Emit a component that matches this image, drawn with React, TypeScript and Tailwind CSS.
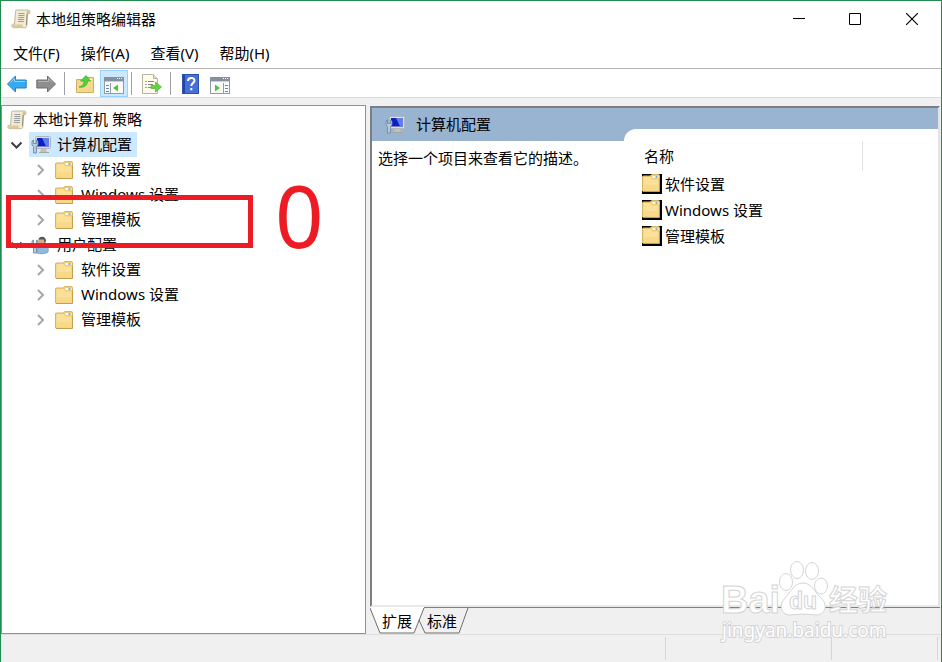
import React from 'react';

const sans = "font-['Noto_Sans','Noto_Sans_CJK_SC',sans-serif]";

function ScrollIcon() {
  return (
    <svg width="20" height="20" viewBox="0 0 20 20">
      <path d="M5.500 1h11.500c1.600 0 2 1 2 2.200S18 5 16.500 5l-.6 11.500c0 1.500-1 2.200-2.400 2.200H3C1.500 18.700.8 17.600.8 16.500c0-1 1-1.500 2.700-1.500L4.500 3.500C4.500 2 4.500 1 5.500 1z" fill="#f1ead4" stroke="#b3a684" strokeWidth="0.800" />
      <path d="M1.500 15.500h9.800c.2 1.500.6 2.700 1.700 3H3c-1.500 0-2-1.500-1.500-3z" fill="#dccb98" />
      <path d="M16.500 1.500c-1 1-.8 2.500-.6 3.500h1.600c1.500-.5 1.500-3-1-3.500z" fill="#d2c08c" />
      <path d="M16 5l-.6 11" stroke="#9c8f6e" />
      <path d="M7.500 4.500h6M7.400 6.500h6M7.200 8.500h6M7 10.500h6M6.900 12.500h6" stroke="#9b9ba0" />
    </svg>
  );
}

function FolderIcon() {
  return (
    <svg width="18" height="18" viewBox="0 0 18 18">
      <path d="M.5 17V3c0-.6.4-1 1-1H8L10 .5h6.500c.6 0 1 .4 1 1V16.500c0 .5-.4 1-1 1z" fill="#f0cd75" stroke="#d9b564" />
      <path d="M1.500 3h7l2 2.500h6v11h-15z" fill="#fbe09a" />
      <path d="M1.500 11h15v5.500h-15z" fill="#f8d987" />
      <path d="M10.500 3h6" stroke="#fffdf2" strokeWidth="2" />
      <path d="M13.500 3h2" stroke="#4b9bd4" strokeWidth="1.500" />
      <path d="M17.500 5v12.500H1" fill="none" stroke="#c69e4b" />
    </svg>
  );
}

function ComputerIcon() {
  return (
    <svg width="20" height="20" viewBox="0 0 20 20">
      <rect x="4.500" y="1.500" width="15" height="12" rx="1" fill="#dcdfe4" stroke="#b2b6bd" />
      <rect x="6" y="3" width="12" height="8.500" fill="#0d1ec4" />
      <path d="M11 3h7v8.500h-3z" fill="#5c80e8" />
      <path d="M10 14h5l1 3H9z" fill="#c4c0b6" />
      <path d="M8 17.500h10" stroke="#a8a49b" />
      <path d="M1 6v4l1.500 1.500V18h3v-6.500L7 10V6L5.500 5v3.500h-3V5z" fill="#b4cbe0" stroke="#6b8298" strokeWidth="0.800" />
    </svg>
  );
}

function UserIcon() {
  return (
    <svg width="20" height="20" viewBox="0 0 20 20">
      <path d="M6 18c-.5-6 1-8 5-8 5 0 7 3 6 7-2 2-8.500 2-11 1z" fill="#8fb9e2" stroke="#7ba3cb" />
      <circle cx="11" cy="6" r="3.800" fill="#d6ab85" />
      <path d="M7.500 4.500C8 .5 15 .5 15 6l-1.500 2.500-.5-4z" fill="#5a544f" />
      <path d="M1 6v4l1.500 1.500V18h3v-6.500L7 10V6L5.500 5v3.500h-3V5z" fill="#b4cbe0" stroke="#6b8298" strokeWidth="0.800" />
    </svg>
  );
}

function ArrowIcon({ forward = false }: { forward?: boolean }) {
  return (
    <svg width="20" height="20" viewBox="0 0 20 20" strokeLinejoin="round">
      {forward ? (
        <>
          <path d="M19.500 10 11.500 2v4H.8v8h10.700v4z" fill="#8e8e8e" stroke="#717171" />
          <path d="M2 7.500h10.500v-3l4 4" fill="none" stroke="#b4b4b4" />
        </>
      ) : (
        <>
          <path d="M.5 10 8.500 2v4h10.700v8H8.500v4z" fill="#35aaf0" stroke="#2583c6" />
          <path d="M18 7.500H7.500v-3l-4 4" fill="none" stroke="#8fd3fa" />
        </>
      )}
    </svg>
  );
}

function FolderUpIcon() {
  return (
    <svg width="20" height="20" viewBox="0 0 20 20">
      <path d="M1.500 18.500V5.500h8l1.500-2h7.500v15z" fill="#f5d88b" stroke="#cfae66" />
      <path d="M13 5.500h4" stroke="#fff" />
      <path d="M4 13c4-1 5-3 5-6H5.500L11 1.500 15.500 7h-3c0 4-3 7-8.500 6z" fill="#57cf3d" stroke="#43ad30" strokeWidth="0.800" />
    </svg>
  );
}

function PanelIcon({ right = false }: { right?: boolean }) {
  return (
    <svg width="20" height="17" viewBox="0 0 20 17">
      <rect x="0.500" y="0.500" width="19" height="16" fill="#fafafa" stroke="#9299a3" />
      <path d="M0 2h20" stroke="#8590a0" strokeWidth="4" />
      <path d="M13 1.500h1M15 1.500h1M17 1.500h1" stroke="#fff" />
      <path d="M1 4.500h18" stroke="#c9ced6" />
      {right ? (
        <>
          <path d="M13.500 6v10" stroke="#9299a3" />
          <path d="M15 8.500h3M15 11.500h3M15 14.500h3" stroke="#4f8bd2" />
          <path d="M5 7.500v7l5-3.500z" fill="#4bc638" />
        </>
      ) : (
        <>
          <path d="M6.500 6v10" stroke="#9299a3" />
          <path d="M2 8.500h3M2 11.500h3M2 14.500h3" stroke="#4f8bd2" />
          <path d="M14 7.500v7L9 11z" fill="#4bc638" />
        </>
      )}
    </svg>
  );
}

function ExportIcon() {
  return (
    <svg width="20" height="20" viewBox="0 0 20 20">
      <path d="M.5.5h11l4 4V19.500H.5z" fill="#fffbea" stroke="#b9b5a0" />
      <path d="M11.500.5v4h4" fill="#e8e0c3" stroke="#b9b5a0" />
      <path d="M3.500 7.500h1M3.500 10.500h1M3.500 13.500h1" stroke="#444" />
      <path d="M6 7.500h6M6 10.500h5M6 13.500h5" stroke="#85858f" />
      <path d="M9 11.500h4.500V8l6 5-6 5v-3.500H9z" fill="#62d43f" stroke="#58bd3c" strokeWidth="0.800" />
    </svg>
  );
}

function HelpIcon() {
  return (
    <svg width="17" height="20" viewBox="0 0 17 20">
      <rect x="0.500" y="0.500" width="16" height="19" fill="#4470d8" stroke="#2c50ab" />
      <path d="M2 1v18" stroke="#2646a0" strokeWidth="2" />
      <path d="M6 7c0-4 6.500-4 6.500-.5 0 2.500-3.200 2.500-3.200 5.500M9.300 14v2.200" fill="none" stroke="#fff" strokeWidth="2" />
    </svg>
  );
}

function Chevron({ open = false }: { open?: boolean }) {
  return (
    <svg width="12" height="12" viewBox="0 0 12 12" fill="none" strokeWidth="2">
      {open ? <path d="M1.500 3.500l5 5 5-5" stroke="#404040" /> : <path d="M4 1l5 5-5 5" stroke="#a6a6a6" />}
    </svg>
  );
}

const menus = ['文件(F)', '操作(A)', '查看(V)', '帮助(H)'];
const folders = ['软件设置', 'Windows 设置', '管理模板'];

function TitleBar() {
  return (
    <header className="flex h-9 items-center pr-px pl-[10px]">
      <ScrollIcon />
      <h1 className="ml-[5px] flex-1">本地组策略编辑器</h1>
      <button aria-label="最小化" className="flex h-full w-[57px] items-center justify-center">
        <svg width="12" height="12" viewBox="0 0 12 12"><path d="M0 5.500h12" stroke="#000" /></svg>
      </button>
      <button aria-label="最大化" className="flex h-full w-14 items-center justify-center">
        <svg width="12" height="12" viewBox="0 0 12 12"><path d="M.5.5h11v11H.5z" fill="none" stroke="#000" /></svg>
      </button>
      <button aria-label="关闭" className="flex h-full w-[57px] items-center justify-center">
        <svg width="12" height="12" viewBox="0 0 12 12"><path d="M0 0l12 12M12 0L0 12" stroke="#000" strokeWidth="1.200" /></svg>
      </button>
    </header>
  );
}

function Separator() {
  return <div className="h-[23px] w-px bg-[#a0a0a0]" />;
}

function Toolbar() {
  return (
    <div className="flex h-[29px] items-center border-b border-[#dcdcdc] pt-px pl-[6px]">
      <button aria-label="后退"><ArrowIcon /></button>
      <button aria-label="前进" className="mr-2 ml-[9px]"><ArrowIcon forward /></button>
      <Separator />
      <button aria-label="上一级" className="mr-[5px] ml-[10px]"><FolderUpIcon /></button>
      <button aria-label="显示/隐藏控制台树" className="mr-[3px] flex h-[27px] w-7 items-center justify-center border border-[#99d1ff] bg-[#cce8ff] pt-1">
        <PanelIcon />
      </button>
      <Separator />
      <button aria-label="导出列表" className="mr-2 ml-[10px]"><ExportIcon /></button>
      <Separator />
      <button aria-label="帮助" className="ml-[11px]"><HelpIcon /></button>
      <button aria-label="显示/隐藏操作窗格" className="ml-[11px] pt-1"><PanelIcon right /></button>
    </div>
  );
}

interface BranchProps {
  label: string;
  icon: React.ReactNode;
  selected?: boolean;
}

function Branch({ label, icon, selected }: BranchProps) {
  return (
    <li>
      <div className="flex h-[25px] items-center pl-2">
        <button aria-label="折叠"><Chevron open /></button>
        <button className={selected ? 'ml-[7px] flex h-[25px] items-center gap-[6px] bg-[#cce8ff] pr-[5px] pl-[2px]' : 'ml-[7px] flex h-[25px] items-center gap-[6px] pr-[5px] pl-[2px]'}>
          {icon}
          <span className="pb-px">{label}</span>
        </button>
      </div>
      <ul>
        {folders.map((name) => (
          <li key={name} className="flex h-[25px] items-center pl-8">
            <button aria-label="展开"><Chevron /></button>
            <button className="ml-[9px] flex items-center gap-2">
              <FolderIcon />
              <span className="pb-px">{name}</span>
            </button>
          </li>
        ))}
      </ul>
    </li>
  );
}

function Tree() {
  return (
    <nav className="w-[365px] shrink-0 border border-[#8c929c] bg-white pt-px">
      <div className="flex h-[25px] items-center gap-[6px] pl-[5px]">
        <ScrollIcon />
        <span className="pb-px">本地计算机 策略</span>
      </div>
      <ul>
        <Branch label="计算机配置" icon={<ComputerIcon />} selected />
        <Branch label="用户配置" icon={<UserIcon />} />
      </ul>
    </nav>
  );
}

function ViewTabs() {
  return (
    <div className="relative flex h-[27px] items-center bg-[#f0f0f0]">
      <div className="ml-[54px] h-full flex-1 border-t border-[#808080]" />
      <svg className="absolute top-0 left-0" width="100" height="27" fill="none">
        <path d="M0 0l10 26h34L54 0z" fill="#fff" />
        <path d="M0 1l10 25h34L54 1M49 13l6 13h34L98 1" stroke="#6f6f6f" />
      </svg>
      <div className="absolute top-0 left-3 flex h-full items-center gap-[15px]">
        <button>扩展</button>
        <button>标准</button>
      </div>
    </div>
  );
}

function Details() {
  return (
    <main className="ml-1 mr-px flex min-w-0 flex-1 flex-col pt-px">
      <div className="flex flex-1 border-t-2 border-r-2 border-b-2 border-l-2 border-t-[#7b7e83] border-r-[#e3e3e3] border-b-[#e9e9e9] border-l-[#7b7e83] bg-[#99b4d1]">
        <section className="flex w-[252px] flex-col">
          <h2 className="flex h-[33px] items-center gap-[11px] pl-[13px]">
            <ComputerIcon />
            <span className="pb-px">计算机配置</span>
          </h2>
          <p className="flex-1 bg-white pt-[6px] pl-[6px]">选择一个项目来查看它的描述。</p>
        </section>
        <section className="flex min-w-0 flex-1 flex-col pt-[21px]">
          <div className="flex-1 rounded-tl-xl bg-white pt-3 pl-[18px]">
            <table className="text-left">
              <thead>
                <tr className="h-[30px]">
                  <th className="w-[220px] border-r border-[#e2e2e2] pl-[2px] font-normal">名称</th>
                </tr>
              </thead>
              <tbody>
                {folders.map((name) => (
                  <tr key={name} className="h-[26px]">
                    <td>
                      <button className="flex items-center gap-[3px]">
                        <span className="bg-black pr-[2px] pb-[2px]"><FolderIcon /></span>
                        {name}
                      </button>
                    </td>
                  </tr>
                ))}
              </tbody>
            </table>
          </div>
        </section>
      </div>
      <ViewTabs />
    </main>
  );
}

function StatusBar() {
  return (
    <footer className="flex h-[28px] justify-end border-t border-[#dfdfdf] pt-[2px] pr-[3px] pb-[2px]">
      <div className="w-[166px] border-l border-[#d5d5d5]" />
      <div className="w-[107px] border-r border-l border-[#d5d5d5]" />
    </footer>
  );
}

function Watermark() {
  return (
    <svg className="pointer-events-none absolute right-[49px] bottom-[18px]" width="172" height="86" viewBox="0 0 172 86" fill="#fff" stroke="#d4d4d4" strokeWidth="1">
      <ellipse cx="66" cy="24" rx="6.500" ry="8.500" />
      <ellipse cx="77" cy="12" rx="6.500" ry="8.500" />
      <ellipse cx="92" cy="13" rx="6.500" ry="8.500" />
      <ellipse cx="101" cy="28" rx="6.500" ry="8" />
      <path d="M83 25c9 0 12 10 18 15 7 6 5 16-4 17-5 0-9-1-14-1s-9 1-14 1c-9-1-10-11-4-17s9-15 18-15z" />
      <text x="1" y="55" fontSize="38" fontWeight="700" className="font-['Liberation_Sans',sans-serif]">Bai</text>
      <text x="69" y="51" fontSize="23" fontWeight="700" className="font-['Liberation_Sans',sans-serif]">du</text>
      <text x="109" y="53" fontSize="29" fontWeight="700" className="font-['Noto_Sans_CJK_SC',sans-serif]">经验</text>
      <text x="2" y="79" fontSize="19" strokeWidth="2" paintOrder="stroke" className="font-['Noto_Sans',sans-serif]">jingyan.baidu.com</text>
    </svg>
  );
}

export default function App() {
  return (
    <div className={`${sans} relative flex min-h-screen flex-col border-x border-t border-[#218c50] bg-[#f0f0f0] text-[15px] leading-[22px] text-black`}>
      <div className="bg-white">
        <TitleBar />
        <div role="menubar" className="flex h-8 items-center gap-[21px] border-b border-[#b4b4b4] pl-3">
          {menus.map((item) => (
            <button key={item} role="menuitem">{item}</button>
          ))}
        </div>
        <Toolbar />
      </div>
      <div className="flex flex-1 pt-[7px]">
        <Tree />
        <Details />
      </div>
      <StatusBar />
      <div className="pointer-events-none absolute top-[194px] left-[5px] h-[53px] w-[247px] border-5 border-[#ed1c24]" />
      <span className="pointer-events-none absolute top-[169px] left-[274px] text-[85px] leading-[90px] text-[#ed1c24]">0</span>
      <Watermark />
    </div>
  );
}
